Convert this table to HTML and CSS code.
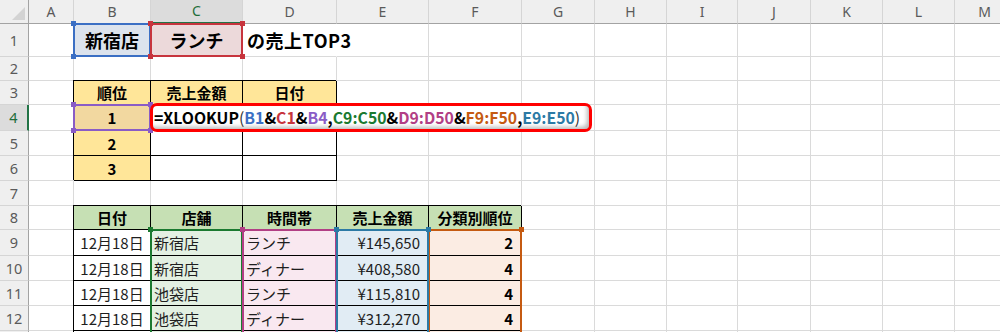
FILE: index.html
```html
<!DOCTYPE html>
<html lang="ja">
<head>
<meta charset="utf-8">
<title>売上TOP3</title>
<link rel="stylesheet" href="styles.css">
</head>
<body>
<div class="wrap">
<div class="sheet">
  <!-- column headers -->
  <div class="h corner"></div>
  <div class="h">A</div><div class="h">B</div><div class="h hsel">C</div><div class="h">D</div><div class="h">E</div><div class="h">F</div><div class="h">G</div><div class="h">H</div><div class="h">I</div><div class="h">J</div><div class="h">K</div><div class="h">L</div><div class="h">M</div>

  <!-- row 1 -->
  <div class="rh">1</div>
  <div class="c"></div>
  <div class="c big ctr f-blue">新宿店</div>
  <div class="c big ctr f-pink">ランチ</div>
  <div class="c big title">の売上TOP3</div>
  <div class="c"></div><div class="c"></div><div class="c"></div><div class="c"></div><div class="c"></div><div class="c"></div><div class="c"></div><div class="c"></div><div class="c"></div>

  <!-- row 2 -->
  <div class="rh">2</div>
  <div class="c"></div><div class="c"></div><div class="c"></div><div class="c"></div><div class="c"></div><div class="c"></div><div class="c"></div><div class="c"></div><div class="c"></div><div class="c"></div><div class="c"></div><div class="c"></div><div class="c"></div>

  <!-- row 3 -->
  <div class="rh">3</div>
  <div class="c"></div>
  <div class="c b hd ctr f-yel">順位</div>
  <div class="c b hd ctr f-yel">売上金額</div>
  <div class="c b hd ctr f-yel">日付</div>
  <div class="c"></div><div class="c"></div><div class="c"></div><div class="c"></div><div class="c"></div><div class="c"></div><div class="c"></div><div class="c"></div><div class="c"></div>

  <!-- row 4 -->
  <div class="rh rsel">4</div>
  <div class="c"></div>
  <div class="c b hd ctr f-yel4">1</div>
  <div class="c b"></div>
  <div class="c b"></div>
  <div class="c"></div><div class="c"></div><div class="c"></div><div class="c"></div><div class="c"></div><div class="c"></div><div class="c"></div><div class="c"></div><div class="c"></div>

  <!-- row 5 -->
  <div class="rh">5</div>
  <div class="c"></div>
  <div class="c b hd ctr f-yel">2</div>
  <div class="c b"></div>
  <div class="c b"></div>
  <div class="c"></div><div class="c"></div><div class="c"></div><div class="c"></div><div class="c"></div><div class="c"></div><div class="c"></div><div class="c"></div><div class="c"></div>

  <!-- row 6 -->
  <div class="rh">6</div>
  <div class="c"></div>
  <div class="c b hd ctr f-yel">3</div>
  <div class="c b"></div>
  <div class="c b"></div>
  <div class="c"></div><div class="c"></div><div class="c"></div><div class="c"></div><div class="c"></div><div class="c"></div><div class="c"></div><div class="c"></div><div class="c"></div>

  <!-- row 7 -->
  <div class="rh">7</div>
  <div class="c"></div><div class="c"></div><div class="c"></div><div class="c"></div><div class="c"></div><div class="c"></div><div class="c"></div><div class="c"></div><div class="c"></div><div class="c"></div><div class="c"></div><div class="c"></div><div class="c"></div>

  <!-- row 8 -->
  <div class="rh">8</div>
  <div class="c"></div>
  <div class="c b hd ctr f-grn">日付</div>
  <div class="c b hd ctr f-grn">店舗</div>
  <div class="c b hd ctr f-grn">時間帯</div>
  <div class="c b hd ctr f-grn">売上金額</div>
  <div class="c b hd ctr f-grn">分類別順位</div>
  <div class="c"></div><div class="c"></div><div class="c"></div><div class="c"></div><div class="c"></div><div class="c"></div><div class="c"></div>

  <!-- row 9 -->
  <div class="rh">9</div>
  <div class="c"></div>
  <div class="c b ctr dt">12月18日</div>
  <div class="c b dt f-c">新宿店</div>
  <div class="c b dt f-d">ランチ</div>
  <div class="c b dt r f-e">¥145,650</div>
  <div class="c b hd r f-f">2</div>
  <div class="c"></div><div class="c"></div><div class="c"></div><div class="c"></div><div class="c"></div><div class="c"></div><div class="c"></div>

  <!-- row 10 -->
  <div class="rh">10</div>
  <div class="c"></div>
  <div class="c b ctr dt">12月18日</div>
  <div class="c b dt f-c">新宿店</div>
  <div class="c b dt f-d">ディナー</div>
  <div class="c b dt r f-e">¥408,580</div>
  <div class="c b hd r f-f">4</div>
  <div class="c"></div><div class="c"></div><div class="c"></div><div class="c"></div><div class="c"></div><div class="c"></div><div class="c"></div>

  <!-- row 11 -->
  <div class="rh">11</div>
  <div class="c"></div>
  <div class="c b ctr dt">12月18日</div>
  <div class="c b dt f-c">池袋店</div>
  <div class="c b dt f-d">ランチ</div>
  <div class="c b dt r f-e">¥115,810</div>
  <div class="c b hd r f-f">4</div>
  <div class="c"></div><div class="c"></div><div class="c"></div><div class="c"></div><div class="c"></div><div class="c"></div><div class="c"></div>

  <!-- row 12 -->
  <div class="rh">12</div>
  <div class="c"></div>
  <div class="c b ctr dt">12月18日</div>
  <div class="c b dt f-c">池袋店</div>
  <div class="c b dt f-d">ディナー</div>
  <div class="c b dt r f-e">¥312,270</div>
  <div class="c b hd r f-f">4</div>
  <div class="c"></div><div class="c"></div><div class="c"></div><div class="c"></div><div class="c"></div><div class="c"></div><div class="c"></div>

  <!-- row 13 (only its top edge is in view) -->
  <div class="rh"></div>
  <div class="c"></div>
  <div class="c b"></div>
  <div class="c b f-c"></div>
  <div class="c b f-d"></div>
  <div class="c b f-e"></div>
  <div class="c b f-f"></div>
  <div class="c"></div><div class="c"></div><div class="c"></div><div class="c"></div><div class="c"></div><div class="c"></div><div class="c"></div>
</div>

<!-- overlay layer: reference highlights and the in-cell formula editor -->
<div class="sheet layer">
  <div class="sel s-b1"><i class="tl"></i><i class="tr"></i><i class="bl"></i><i class="br"></i></div>
  <div class="sel s-c1"><i class="tl"></i><i class="tr"></i><i class="bl"></i><i class="br"></i></div>
  <div class="sel s-b4"><i class="tl"></i><i class="tr"></i><i class="bl"></i><i class="br"></i></div>
  <div class="sel s-c9"><i class="tl"></i><i class="tr"></i></div>
  <div class="sel s-d9"><i class="tl"></i><i class="tr"></i></div>
  <div class="sel s-f9"><i class="tl"></i><i class="tr"></i></div>
  <div class="sel s-e9"><i class="tl"></i><i class="tr"></i></div>

  <div class="fx"><span>=XLOOKUP</span><span class="paren">(</span><span class="k-blue">B1</span>&amp;<span class="k-red">C1</span>&amp;<span class="k-pur">B4</span>,<span class="k-grn">C9:C50</span>&amp;<span class="k-mag">D9:D50</span>&amp;<span class="k-org">F9:F50</span>,<span class="k-teal">E9:E50</span><span class="paren">)</span></div>
</div>
</div>
</body>
</html>
```

FILE: styles.css
```css
* { box-sizing: border-box; margin: 0; padding: 0; }
html, body { width: 1000px; height: 332px; overflow: hidden; background: #fff; }
body { font-family: "Noto Sans CJK JP", "Noto Sans", sans-serif; color: #000; }

.wrap { position: relative; }

.sheet {
  display: grid;
  grid-template-columns: 29px 45px 77px 92px 94px 92px 93px 73px 72px 71px 73px 72px 72px 60px;
  grid-template-rows: 24px 33px 24px 24px 26px 25px 25px 25px 24px 26px 25px 25px 25px 25px;
}
.layer { position: absolute; top: 0; left: 0; right: 0; bottom: 0; z-index: 2; pointer-events: none; }

/* headers */
.h {
  position: relative;
  background: #efefef;
  border-right: 1px solid #d5d5d5;
  border-bottom: 1px solid #a3a3a3;
  display: flex; align-items: center; justify-content: center;
  font-family: "Noto Sans", sans-serif;
  font-size: 14px; color: #5a5a5a; line-height: 1;
}
.h.corner { border-right-color: #a3a3a3; }
.h.corner::after {
  content: ""; position: absolute; right: 3px; bottom: 3px;
  width: 0; height: 0;
  border-left: 13px solid transparent;
  border-bottom: 13px solid #d3d3d3;
}
.h.hsel { background: #dcdcdc; color: #1f6e3a; border-bottom: 2px solid #217346; }

.rh {
  background: #efefef;
  border-right: 1px solid #a3a3a3;
  border-bottom: 1px solid #d5d5d5;
  display: flex; align-items: center; justify-content: center;
  font-family: "Noto Sans", sans-serif;
  font-size: 14.5px; color: #5a5a5a; line-height: 1;
}
.rh.rsel { background: #dcdcdc; color: #1f6e3a; border-right: 2px solid #217346; }

/* cells */
.c {
  border-right: 1px solid #dadada;
  border-bottom: 1px solid #dadada;
  display: flex; align-items: center;
  padding: 0 3px;
  font-size: 15px; line-height: 1;
  white-space: nowrap; min-width: 0;
}
.c.b {
  border-right-color: #000;
  border-bottom-color: #000;
  box-shadow: -1px -1px 0 #000;
}
.ctr { justify-content: center; }
.r { justify-content: flex-end; padding-right: 8px; }
.big { font-size: 18px; font-weight: 700; }
.title { border-right-color: transparent; overflow: visible; padding-left: 4px; letter-spacing: 0.5px; }
.hd { font-weight: 700; }
.dt { color: #1e1e1e; }

.f-blue { background: #dce3ed; }
.f-pink { background: #ecd9da; }
.f-yel { background: #ffe699; }
.f-yel4 { background: #f2d8a0; }
.f-grn { background: #c6e0b4; }
.f-c { background: #e3f0e2; }
.f-d { background: #f9e8f0; }
.f-e { background: #e1ecf4; }
.f-f { background: #fbece3; }

/* range highlights drawn over the grid */
.sel {
  position: relative;
  margin: -1px 0 0 -1px;
  border: 2px solid currentColor;
}
.sel i { position: absolute; width: 5px; height: 5px; background: currentColor; }
.sel .tl { left: -4px; top: -4px; }
.sel .tr { right: -4px; top: -4px; }
.sel .bl { left: -4px; bottom: -4px; }
.sel .br { right: -4px; bottom: -4px; }

.s-b1 { grid-area: 2 / 3 / 3 / 4; color: #3b6fc4; }
.s-c1 { grid-area: 2 / 4 / 3 / 5; color: #c7343d; }
.s-b4 { grid-area: 5 / 3 / 6 / 4; color: #8a5cc6; }
.s-c9 { grid-area: 10 / 4 / 15 / 5; color: #1b7a30; }
.s-d9 { grid-area: 10 / 5 / 15 / 6; color: #b23f85; }
.s-f9 { grid-area: 10 / 7 / 15 / 8; color: #c55a11; }
.s-e9 { grid-area: 10 / 6 / 15 / 7; color: #2c7aa5; }

/* formula editor box */
.fx {
  grid-area: 5 / 4 / 6 / 9;
  margin: -2px 3px -1px -1px;
  position: relative;
  z-index: 3;
  background: #fff;
  border: 3.5px solid #f00;
  border-radius: 7px;
  box-shadow: inset -3px -3px 4px -1px rgba(0, 0, 0, 0.28);
  display: flex; align-items: center;
  padding-left: 1px;
  font-size: 15.8px; font-weight: 700; line-height: 1;
  white-space: nowrap;
  overflow: hidden;
}
.paren { font-weight: 400; color: #333; }
.k-blue { color: #3b6fc4; }
.k-red { color: #c7343d; }
.k-pur { color: #8a5cc6; }
.k-grn { color: #1b7a30; }
.k-mag { color: #b23f85; }
.k-org { color: #c55a11; }
.k-teal { color: #2c7aa5; }
```
